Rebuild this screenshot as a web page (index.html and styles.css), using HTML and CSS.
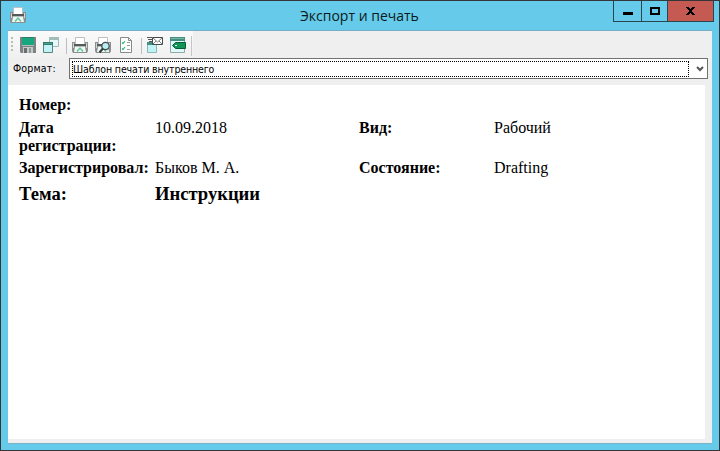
FILE: index.html
```html
<!DOCTYPE html>
<html lang="ru">
<head>
<meta charset="utf-8">
<title>Экспорт и печать</title>
<link rel="stylesheet" href="styles.css">
</head>
<body>
<svg width="0" height="0" class="defs">
  <symbol id="printer" viewBox="0 0 16 16">
    <path d="M0 5h3v8h10V5h3v9l-1 2H1l-1-2z" fill="#8b8f90"/>
    <path d="M1 6h1v5H1zM14 6h1v5h-1z" fill="#d5d8d8"/>
    <path d="M3.500 8V.5h9V8" fill="#fff" stroke="#bcc0c0"/>
    <path d="M2 7h12v2H2z" fill="#54595a"/>
    <path d="M3 9h10v1H3z" fill="#b9bebe"/>
    <path d="M3 10h10l1 5H2z" fill="#eef8f3"/>
    <path d="M5 14.500 8 11l3 3.500" fill="none" stroke="#5fc596" stroke-width="1.400"/>
  </symbol>
</svg>
<div class="window">
  <header class="titlebar">
    <svg class="app-icon" width="16" height="16"><use href="#printer"/></svg>
    <h1>Экспорт и печать</h1>
    <div class="controls">
      <button class="min" aria-label="Свернуть"><svg width="10" height="3"><path d="M0 0h10v3H0z"/></svg></button>
      <button class="max" aria-label="Развернуть"><svg width="10" height="8"><path d="M1 1h8v6H1z" fill="none" stroke="#000" stroke-width="2"/></svg></button>
      <button class="close" aria-label="Закрыть"><svg width="9" height="8" shape-rendering="crispEdges"><path d="M0 0h3v1h1v1h1V1h1V0h3v1H8v1H7v1H6v2h1v1h1v1h1v1H6V7H5V6H4v1H3v1H0V7h1V6h1V5h1V3H2V2H1V1H0z"/></svg></button>
    </div>
  </header>
  <main class="client">
    <div class="toolbar">
      <span class="grip"></span>
      <svg width="16" height="16"><path d="M0 0h16v16H1l-1-1z" fill="#7d8282"/><path d="M2 0h12v8H2z" fill="#17a67d"/><path d="M2 0h12v1H2z" fill="#31786a"/><path d="M2 8h12v1H2z" fill="#b5bcbc"/><path d="M3 10h10v6H3z" fill="#c4caca"/><path d="M4 11h3v5H4z" fill="#696f6f"/><path d="M9 11h2v5H9z" fill="#8f9696"/></svg>
      <svg width="16" height="16"><path d="M6.500.5h9v9h-9z" fill="#e7f8f8" stroke="#a2b8b8"/><path d="M6 0h10v3H6z" fill="#a0bdba"/><path d="M.5 5.500h9v10h-9z" fill="#bff3f5" stroke="#5c8583"/><path d="M0 5h10v3H0z" fill="#347a70"/><path d="M1 6h8v1H1z" fill="#4ca18c"/></svg>
      <span class="sep"></span>
      <svg width="16" height="16"><use href="#printer"/></svg>
      <svg width="16" height="16"><use href="#printer"/><circle cx="10.500" cy="9" r="3.700" fill="#b9eef2" stroke="#444b4d" stroke-width="1.300"/><path d="m8 11.500-3.500 4" stroke="#333b3b" stroke-width="2"/></svg>
      <svg width="16" height="16"><path d="M2.500.5h8l3 3v12h-11z" fill="#fff" stroke="#858b8b"/><path d="M10.500.5v3h3" fill="none" stroke="#858b8b"/><path d="m4 5.500 1 1 2-2.500M4 11.500l1 1 2-2.500" fill="none" stroke="#32b878" stroke-width="1.200"/><path d="M9 5.500h3M9 8.500h3M9 12.500h3" stroke="#969b9b"/></svg>
      <span class="sep"></span>
      <svg width="16" height="16"><path d="M.5 5.500h9v10h-9z" fill="#bff3f5" stroke="#8bb8b7"/><path d="M0 5h10v3H0z" fill="#458d80"/><path d="M0 .5h5M1 2.500h4M2 4.500h3" stroke="#555"/><path d="M5.500.5h10v7h-10z" fill="#fff" stroke="#444b4b"/><path d="m6 1 4.500 4L15 1M6 7l3-3M15 7l-3-3" fill="none" stroke="#555c5c" stroke-width=".8"/></svg>
      <svg width="16" height="16"><path d="M.5.5h14v15H.5z" fill="#dffafa" stroke="#8fa9a7"/><path d="M0 0h15v4H0z" fill="#498d7e"/><path d="M1 1h13v1H1z" fill="#70b9a4"/><path d="m2.500 8.500 3-3h10v6h-10z" fill="#119557" stroke="#075f38"/><path d="M5 8h2v1H5z" fill="#fff"/></svg>
      <span class="toolbar-end"></span>
    </div>
    <div class="format-row">
      <label for="format">Формат:</label>
      <div class="combo" id="format">
        <span class="value">Шаблон печати внутреннего</span>
        <svg width="8" height="6"><path d="m1 1 3 3 3-3" fill="none" stroke="#555" stroke-width="2"/></svg>
      </div>
    </div>
    <section class="document">
      <div class="row"><b>Номер:</b></div>
      <div class="row"><b>Дата<br>регистрации:</b><span>10.09.2018</span><b>Вид:</b><span>Рабочий</span></div>
      <div class="row"><b>Зарегистрировал:</b><span>Быков М. А.</span><b>Состояние:</b><span>Drafting</span></div>
      <div class="row subject"><b>Тема:</b><b>Инструкции</b></div>
    </section>
  </main>
</div>
</body>
</html>
```
FILE: styles.css
```css
* { box-sizing: border-box; }
body { margin: 0; }
svg { display: block; flex: none; }
.defs { position: absolute; }
.window {
  width: 720px;
  height: 451px;
  border: 1px solid #35363a;
  background: #66caea;
  padding: 0 7px;
}
.titlebar {
  height: 29px;
  display: flex;
}
.app-icon { margin: 6px 0 0 2px; }
.titlebar h1 {
  margin: 5px 0 0 274px;
  font: 14px/20px "Open Sans", sans-serif;
  color: #0b1a20;
  white-space: nowrap;
}
.controls {
  display: flex;
  width: 101px;
  height: 21px;
  border: 1px solid #2b4550;
  border-top: 0;
  margin-left: auto;
  margin-right: -2px;
}
.controls button {
  display: flex;
  align-items: center;
  justify-content: center;
  border: 0;
  border-right: 1px solid #2b4550;
  padding: 0;
  background: none;
}
.controls .min { width: 28px; padding-top: 5px; }
.controls .max { width: 26px; }
.controls .close { flex: 1; border: 0; background: #c45a52; }
.client {
  height: 414px;
  background: #efefef;
  border-top: 1px solid #75aec4;
  border-bottom: 1px solid #78b3c9;
}
.toolbar {
  width: 185px;
  height: 27px;
  padding: 6px 0 0 3px;
  display: flex;
  gap: 7px;
  background: linear-gradient(#fafafa, #f0f0f0);
}
.grip {
  width: 2px;
  height: 15px;
  background: repeating-linear-gradient(#bdbdbd 0 2px, transparent 2px 4px);
}
.sep { width: 1px; height: 16px; margin: 1px -2px 0 0; background: #bdbdbd; }
.toolbar-end { width: 1px; height: 20px; margin: -1px 0 0 -2px; background: #c6c6c6; }
.format-row {
  height: 27px;
  display: flex;
  padding-left: 5px;
  font: 10.5px/13px "DejaVu Sans Condensed", "DejaVu Sans", sans-serif;
  letter-spacing: -0.12px;
}
.format-row label { width: 56px; padding-top: 4px; letter-spacing: 0.2px; }
.combo {
  width: 639px;
  height: 21px;
  border: 1px solid #707070;
  background: #fff;
  display: flex;
  align-items: center;
  gap: 7px;
  padding-left: 2px;
}
.value {
  width: 617px;
  height: 16px;
  border: 1px dotted #000;
  line-height: 15px;
}
.document {
  width: 697px;
  height: 354px;
  background: #fff;
  padding: 11px 11px 0;
  font: 16px/18px "Liberation Serif", serif;
  color: #000;
}
.row {
  display: grid;
  grid-template-columns: 136px 204px 135px 1fr;
  margin-bottom: 4px;
  white-space: nowrap;
}
.row:first-child { margin-bottom: 5px; }
.subject { font-size: 18.6px; line-height: 22px; margin-top: 6px; }
```
